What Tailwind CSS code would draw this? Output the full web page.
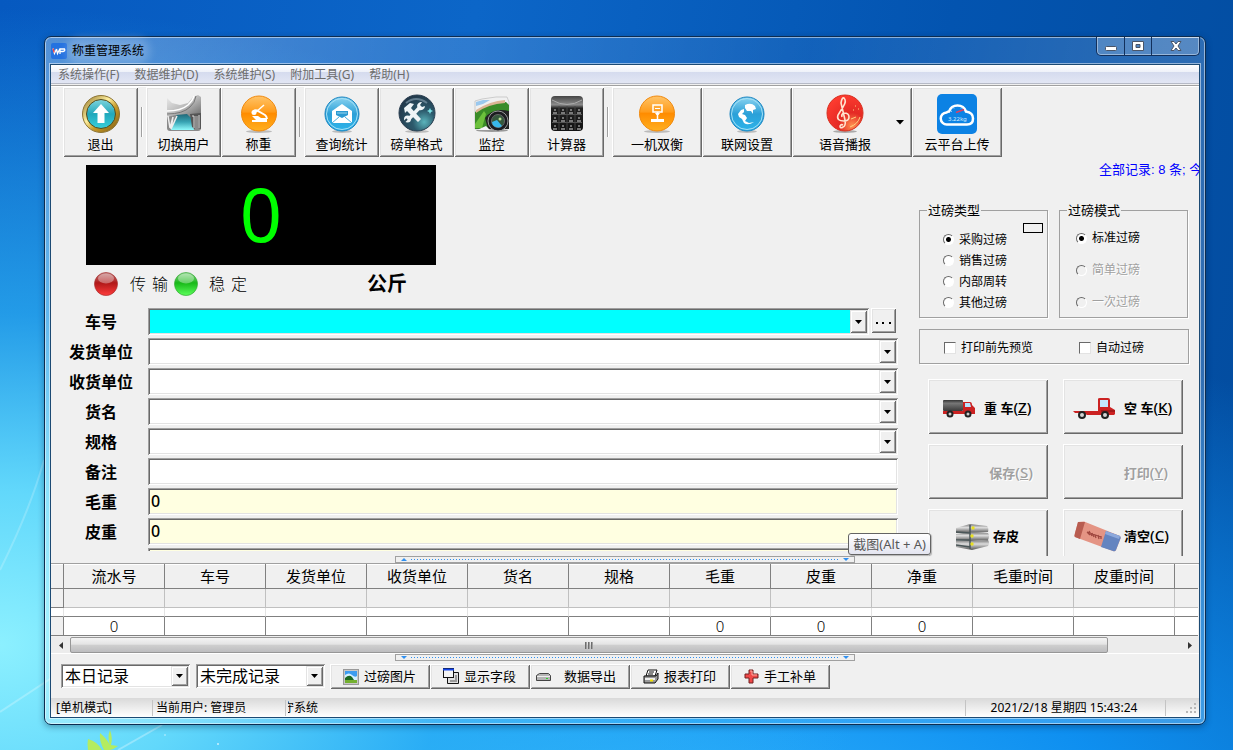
<!DOCTYPE html>
<html lang="zh-CN">

<head>
    <meta charset="UTF-8" />
    <title>称重管理系统</title>
    <script src="https://cdn.jsdelivr.net/npm/@tailwindcss/browser@4"></script>
</head>

<body class="font-['Noto_Sans','Noto_Sans_CJK_SC',sans-serif] text-black">
    <!-- Desktop -->
    <div class="relative h-screen overflow-hidden bg-[radial-gradient(ellipse_70%_85%_at_0%_86%,#8cf0ff_0%,#62d8fb_24%,#2cb0f4c0_52%,#1c90f000_100%),radial-gradient(ellipse_100%_75%_at_48%_115%,#38baff_0%,#1098fae0_45%,#0a60d000_100%),linear-gradient(100deg,#0659c0_0%,#0c66c8_35%,#0354b0_70%,#034c9e_100%)] pt-9 pr-[27px] pb-[25px] pl-11">
        <svg class="absolute bottom-0 left-0" width="260" height="300" viewBox="0 0 260 300" fill="none">
            <path d="M0 262 L170 150" stroke="#fff" stroke-opacity=".25" stroke-width="2" />
            <path d="M118 300 L162 275" stroke="#fff" stroke-opacity=".3" stroke-width="2" />
            <path d="M0 120 Q30 60 44 10" stroke="#fff" stroke-opacity=".2" stroke-width="2" />
            <path d="M88 300 Q87 294 88 289 Q98 292 102 300 Z" fill="#b4ec60" />
            <path d="M104 300 Q99 291 100 283 Q107 289 110 295 Q107 287 110 280 Q113 288 111 295 L118 296 Q114 299 110 300 Z" fill="#b4ec60" />
            <circle cx="218" cy="294" r="1" fill="#fff" fill-opacity=".7" />
            <circle cx="165" cy="285" r="1" fill="#fff" fill-opacity=".4" />
        </svg>

        <!-- Window -->
        <div class="relative flex h-full flex-col rounded-[7px] border border-[#0c2c50] bg-[linear-gradient(100deg,#ffffff4d_0%,#ffffff26_30%,#ffffff0d_60%,#ffffff33_100%)] px-[5px] pb-[6px] shadow-[inset_0_0_0_1px_#ffffff80,0_2px_6px_#00204060]">
            <!-- Title bar -->
            <header class="flex h-[27px] shrink-0 justify-between">
                <div class="flex items-center pl-px">
                    <svg width="16" height="16" viewBox="0 0 16 16">
                        <rect width="16" height="16" rx="2" fill="#2472e0" />
                        <path d="M2 5.500l1.500 5L5.500 6M5.500 6l1 4.500L9 5.500v5.500M9 6h4.500q1 2-1.500 2.500H9" fill="none" stroke="#fff" stroke-width="1.300" />
                        <path d="M2 5.500l1.200 4" stroke="#f04040" stroke-width="1.300" />
                    </svg>
                    <h1 class="ml-[5px] rounded-full bg-white/20 text-xs leading-4 shadow-[0_0_8px_6px_#ffffff33]">称重管理系统</h1>
                </div>
                <div class="flex h-[19px] rounded-b-[5px] border border-t-0 border-[#12305c] bg-white/20 shadow-[inset_0_0_0_1px_#ffffff66]">
                    <button class="flex w-7 items-center justify-center border-r border-[#12305c]" aria-label="最小化">
                        <svg width="12" height="12" viewBox="0 0 12 12"><rect x=".5" y="6.500" width="11" height="4" rx="1" fill="#fff" stroke="#4a5568" /></svg>
                    </button>
                    <button class="flex w-[27px] items-center justify-center border-r border-[#12305c]" aria-label="最大化">
                        <svg width="12" height="10" viewBox="0 0 12 10"><path fill-rule="evenodd" d="M.5.500h11v9H.5zM4 3.500v3h4v-3z" fill="#fff" stroke="#4a5568" /></svg>
                    </button>
                    <button class="flex w-[47px] items-center justify-center" aria-label="关闭">
                        <svg width="12" height="10" viewBox="0 0 12 10"><path d="M1 .500h3l2 2.500 2-2.500h3L8 5l3 4.500H8L6 7 4 9.500H1L4 5z" fill="#fff" stroke="#4a5568" /></svg>
                    </button>
                </div>
            </header>

            <!-- Client area -->
            <div class="flex min-h-0 flex-1 flex-col overflow-hidden border border-[#1c4a74] bg-[#f0f0f0] shadow-[0_0_0_1px_#ffffff80]">
                <!-- Menu -->
                <nav class="flex h-[19px] shrink-0 items-center gap-[15px] border-b border-[#b6bac6] bg-[linear-gradient(#fff_0%,#eef1f9_38%,#d5dbee_40%,#e2e6f4_100%)] pt-0.5 pl-[7px] text-xs leading-4 text-[#6d6d6d]">
                    <a href="#">系统操作(F)</a>
                    <a href="#">数据维护(D)</a>
                    <a href="#">系统维护(S)</a>
                    <a href="#">附加工具(G)</a>
                    <a href="#">帮助(H)</a>
                </nav>

                <!-- Toolbar -->
                <div class="mt-px flex shrink-0 items-start border-t border-[#a0a0a0] pt-px pl-3 text-[13px] leading-5 shadow-[inset_0_1px_#fff]">
                    <button class="flex h-[70px] w-[75px] flex-col items-center pt-[7px] shadow-[inset_1px_1px_#fff,inset_-1px_-1px_#696969,inset_2px_2px_#e3e3e3,inset_-2px_-2px_#a0a0a0]">
                        <svg class="shrink-0" width="40" height="40" viewBox="0 0 40 40">
                            <defs>
                                <linearGradient id="gold" x2="1" y2="1"><stop stop-color="#8a6a1c" /><stop offset=".4" stop-color="#fff0a0" /><stop offset=".6" stop-color="#c89a28" /><stop offset="1" stop-color="#7a5a14" /></linearGradient>
                                <linearGradient id="teal" x2="0" y2="1"><stop stop-color="#7fd4dc" /><stop offset=".5" stop-color="#22a8bc" /><stop offset="1" stop-color="#38d0dc" /></linearGradient>
                            </defs>
                            <circle cx="20" cy="20" r="18.500" fill="url(#gold)" stroke="#8c7434" />
                            <circle cx="20" cy="20" r="14.500" fill="url(#teal)" stroke="#5a4a18" />
                            <path d="M20 10l8 9h-4.500v10h-7V19H12z" fill="#fff" />
                        </svg>
                        退出
                    </button>
                    <div class="mx-[3px] mt-5 h-[30px] w-0.5 border-l border-[#a0a0a0] bg-white"></div>
                    <button class="flex h-[70px] w-[75px] flex-col items-center pt-[7px] shadow-[inset_1px_1px_#fff,inset_-1px_-1px_#696969,inset_2px_2px_#e3e3e3,inset_-2px_-2px_#a0a0a0]">
                        <svg class="shrink-0" width="40" height="40" viewBox="0 0 40 40">
                            <defs>
                                <linearGradient id="steel" x2="1" y2="1"><stop stop-color="#eee" /><stop offset=".5" stop-color="#bbb" /><stop offset="1" stop-color="#666" /></linearGradient>
                                <linearGradient id="road" x2="0" y2="1"><stop stop-color="#226878" /><stop offset=".5" stop-color="#38a4b4" /><stop offset="1" stop-color="#90fafc" /></linearGradient>
                            </defs>
                            <path d="M3 20h34v14q0 3-3 3H6q-3 0-3-3z" fill="#8a8a8a" />
                            <path d="M13 20h13l4 16H7z" fill="url(#road)" />
                            <path d="M3 4l5 5 8 2 8-2 5-6 5-2 3 2v18l-11 2-3-3-11 1-9 2z" fill="url(#steel)" />
                            <path d="M3 17q14 0 21-6 5-5 6-9" fill="none" stroke="#fff" stroke-width="1.500" />
                            <path d="M3 20q16 0 23-7 5-4 6-11" fill="none" stroke="#777" />
                            <path d="M4 22l2 12 3-11M9 23l-2 12 6-13" fill="none" stroke="#eee" stroke-width="1.500" />
                            <path d="M26 20l11-1v16l-3-1V22l-3 0v13l-3-2z" fill="#555" />
                            <path d="M28 22h2v12M35 21v13" stroke="#ddd" fill="none" />
                        </svg>
                        切换用户
                    </button>
                    <button class="flex h-[70px] w-[75px] flex-col items-center pt-[7px] shadow-[inset_1px_1px_#fff,inset_-1px_-1px_#696969,inset_2px_2px_#e3e3e3,inset_-2px_-2px_#a0a0a0]">
                        <svg class="shrink-0" width="40" height="40" viewBox="0 0 40 40">
                            <defs>
                                <linearGradient id="orange" x2="0" y2="1"><stop stop-color="#ffc468" /><stop offset=".45" stop-color="#ff9c1c" /><stop offset=".5" stop-color="#ff8c00" /><stop offset="1" stop-color="#ffb020" /></linearGradient>
                            </defs>
                            <ellipse cx="20" cy="37.500" rx="13" ry="1.500" fill="#bbb" />
                            <circle cx="20" cy="19.500" r="17.500" fill="url(#orange)" stroke="#f08a10" />
                            <path d="M17 18l8-7" fill="none" stroke="#fff" stroke-width="1.500" />
                            <path d="M14 18.500q1-3 4-2l8 4.500q2 1.500 2 4" fill="none" stroke="#fff" stroke-width="2" />
                            <circle cx="15" cy="18.500" r="2.500" fill="#fff" />
                            <path d="M13 22h6l3 2h6v4H13v-2h4z" fill="#fff" />
                        </svg>
                        称重
                    </button>
                    <div class="mx-[3px] mt-5 h-[30px] w-0.5 border-l border-[#a0a0a0] bg-white"></div>
                    <button class="flex h-[70px] w-[75px] flex-col items-center pt-[7px] shadow-[inset_1px_1px_#fff,inset_-1px_-1px_#696969,inset_2px_2px_#e3e3e3,inset_-2px_-2px_#a0a0a0]">
                        <svg class="shrink-0" width="40" height="40" viewBox="0 0 40 40">
                            <defs>
                                <linearGradient id="sky" x2="0" y2="1"><stop stop-color="#8cd4f0" /><stop offset=".5" stop-color="#2ba0d8" /><stop offset="1" stop-color="#2cb4ea" /></linearGradient>
                            </defs>
                            <ellipse cx="20" cy="37.500" rx="10" ry="1.500" fill="#bbb" />
                            <circle cx="20" cy="20" r="17" fill="url(#sky)" stroke="#1a84c0" />
                            <circle cx="20" cy="20" r="15.500" fill="none" stroke="#a4e0f6" />
                            <path d="M10 17L20 10l10 7v12H10z" fill="#fff" />
                            <path d="M14 17h12v4l-6 3-6-3z" fill="#2b9ad2" />
                            <path d="M15 19h10" stroke="#9ad6ee" />
                            <path d="M10 29l7-6M30 29l-7-6" stroke="#4aaede" />
                        </svg>
                        查询统计
                    </button>
                    <button class="flex h-[70px] w-[75px] flex-col items-center pt-[7px] shadow-[inset_1px_1px_#fff,inset_-1px_-1px_#696969,inset_2px_2px_#e3e3e3,inset_-2px_-2px_#a0a0a0]">
                        <svg class="shrink-0" width="40" height="40" viewBox="0 0 40 40">
                            <defs>
                                <radialGradient id="slate" cx=".7" cy=".75" r=".8"><stop stop-color="#5ab4bc" /><stop offset=".4" stop-color="#2c5a6c" /><stop offset="1" stop-color="#22384a" /></radialGradient>
                            </defs>
                            <ellipse cx="20" cy="37.500" rx="12" ry="1.500" fill="#bbb" />
                            <circle cx="20" cy="19" r="18" fill="url(#slate)" stroke="#2a3e50" />
                            <path d="M9 9q10-8 21 0" stroke="#8aa4b4" stroke-width="2" fill="none" opacity=".6" />
                            <path d="M7 14l6-5 4 1-3 4 10 11-3 3-11-11-2 2z" fill="#eef4f6" />
                            <path d="M11 26l12-13" stroke="#eef4f6" stroke-width="3.500" />
                            <path d="M20 12a4.500 4.500 0 0 1 5-4l-2 3 2 2 3-1a4.500 4.500 0 0 1-6 4z" fill="#eef4f6" />
                            <circle cx="10.500" cy="25" r="3.500" fill="#eef4f6" />
                            <path d="M7 28l3-3" stroke="#2c4a5c" stroke-width="2" />
                            <path d="M33 14l1 2 2 1-2 1-1 2-1-2-2-1 2-1z" fill="#7ae0e4" />
                        </svg>
                        磅单格式
                    </button>
                    <button class="flex h-[70px] w-[75px] flex-col items-center pt-[7px] shadow-[inset_1px_1px_#fff,inset_-1px_-1px_#696969,inset_2px_2px_#e3e3e3,inset_-2px_-2px_#a0a0a0]">
                        <svg class="shrink-0" width="40" height="40" viewBox="0 0 40 40">
                            <ellipse cx="20" cy="36.500" rx="16" ry="1.500" fill="#999" />
                            <path d="M3 7l7-2 14-2 11 0 2 5-1 27H3z" fill="#f0f0f0" stroke="#bbb" stroke-width=".7" />
                            <path d="M4 8l7-2 7 0-7 4-7 2z" fill="#9ac8ee" />
                            <path d="M3 18Q14 9 34 8l3 3v24H3z" fill="#3a8c28" />
                            <path d="M4 16Q18 7 33 6v3Q16 10 4 19z" fill="#dcb494" />
                            <path d="M3 30l9-13 2 3-4 14H3z" fill="#6cc03c" />
                            <path d="M13 24q8-11 24-7v18H16z" fill="#222" />
                            <path d="M5 36l9-4 4 4z" fill="#f4f4f8" />
                            <circle cx="26" cy="27" r="10" fill="#1c1c20" stroke="#999" />
                            <circle cx="26" cy="27" r="6.500" fill="#34583c" stroke="#666" />
                            <path d="M20 28a6 6 0 0 0 10 4l-5-6z" fill="#38b8ec" />
                            <circle cx="28" cy="25" r="1.500" fill="#b8e090" />
                        </svg>
                        监控
                    </button>
                    <button class="flex h-[70px] w-[75px] flex-col items-center pt-[7px] shadow-[inset_1px_1px_#fff,inset_-1px_-1px_#696969,inset_2px_2px_#e3e3e3,inset_-2px_-2px_#a0a0a0]">
                        <svg class="shrink-0" width="40" height="40" viewBox="0 0 40 40">
                            <defs>
                                <linearGradient id="keys" x2="0" y2="1"><stop stop-color="#444" /><stop offset=".25" stop-color="#8c8c8c" /><stop offset=".35" stop-color="#222" /><stop offset="1" stop-color="#111" /></linearGradient>
                            </defs>
                            <rect x="4" y="2" width="32" height="35" rx="4" fill="url(#keys)" />
                            <path d="M5 6q15 9 30 0" fill="none" stroke="#aaa" />
                            <path d="M5 12.500h30M5 20.500h30M5 28.500h30" stroke="#555" />
                            <path d="M12 12v24M20 12v24M28 12v24" stroke="#444" />
                            <path d="M8 15v2M16 15v2M24 15v2M32 15v2M8 23v2M16 23v2M24 23v2M32 23v2M8 31v2M16 31v2M24 31v2M32 31v2" stroke="#ccc" />
                            <path d="M6 19h4M14 19h4M22 19h4M30 19h4M6 27h4M14 27h4M22 27h4M30 27h4M6 35h4M14 35h4M22 35h4M30 35h4" stroke="#999" stroke-width="1.500" />
                        </svg>
                        计算器
                    </button>
                    <div class="mx-[3px] mt-5 h-[30px] w-0.5 border-l border-[#a0a0a0] bg-white"></div>
                    <button class="flex h-[70px] w-[90px] flex-col items-center pt-[7px] shadow-[inset_1px_1px_#fff,inset_-1px_-1px_#696969,inset_2px_2px_#e3e3e3,inset_-2px_-2px_#a0a0a0]">
                        <svg class="shrink-0" width="40" height="40" viewBox="0 0 40 40">
                            <ellipse cx="20" cy="37.500" rx="13" ry="1.500" fill="#bbb" />
                            <circle cx="20" cy="19.500" r="17.500" fill="url(#orange)" stroke="#f08a10" />
                            <path d="M16 11h9v7h-9zM20.500 18v7" fill="none" stroke="#fff" stroke-width="1.500" />
                            <path d="M18 14.500h5" stroke="#fff" />
                            <path d="M18 19h5l-1.500 2h-2zM14 25h13v3H14z" fill="#fff" />
                        </svg>
                        一机双衡
                    </button>
                    <button class="flex h-[70px] w-[90px] flex-col items-center pt-[7px] shadow-[inset_1px_1px_#fff,inset_-1px_-1px_#696969,inset_2px_2px_#e3e3e3,inset_-2px_-2px_#a0a0a0]">
                        <svg class="shrink-0" width="40" height="40" viewBox="0 0 40 40">
                            <ellipse cx="20" cy="37.500" rx="10" ry="1.500" fill="#bbb" />
                            <circle cx="20" cy="20" r="17" fill="url(#sky)" stroke="#1a84c0" />
                            <circle cx="20" cy="20" r="15.500" fill="none" stroke="#a4e0f6" />
                            <path d="M18 11q6-3 10 1l1 3-3 1 0 4-2-3-4 0-2-3z" fill="#fff" />
                            <path d="M11 20l3-4 3-1 0 3-2 2 3 1 2 3-2 3 4 2 5-1q-6 4-10 1l-2-4-3-2z" fill="#fff" />
                        </svg>
                        联网设置
                    </button>
                    <button class="relative flex h-[70px] w-[120px] flex-col items-center pt-[7px] pr-[14px] shadow-[inset_1px_1px_#fff,inset_-1px_-1px_#696969,inset_2px_2px_#e3e3e3,inset_-2px_-2px_#a0a0a0]">
                        <svg class="shrink-0" width="40" height="40" viewBox="0 0 40 40">
                            <defs>
                                <radialGradient id="ruby" cx=".7" cy=".85" r=".9"><stop stop-color="#ff9050" /><stop offset=".4" stop-color="#e42a24" /><stop offset="1" stop-color="#ff3c30" /></radialGradient>
                            </defs>
                            <ellipse cx="20" cy="37.500" rx="12" ry="1.500" fill="#aaa" />
                            <circle cx="20" cy="19" r="18" fill="url(#ruby)" stroke="#d83020" />
                            <path d="M18 33q-3 2-3-1 1-2 3-1M18 33q3-1 2-7L16 9q1-6 3-5 3 3-1 9l-5 8q-2 6 6 6 5 0 5-4t-5-4q-3 1-2 4" fill="none" stroke="#ffe4d0" stroke-width="1.600" />
                            <path d="M26 25l5-2M30 12l1 0M33 15l1 0M28 16l1 0M25 33q8-3 10-10" stroke="#ffd080" fill="none" />
                        </svg>
                        语音播报
                        <svg class="absolute top-[33px] right-2" width="8" height="5" viewBox="0 0 8 5"><path d="M0 0h8L4 4.500z" /></svg>
                    </button>
                    <button class="flex h-[70px] w-[90px] flex-col items-center pt-[7px] shadow-[inset_1px_1px_#fff,inset_-1px_-1px_#696969,inset_2px_2px_#e3e3e3,inset_-2px_-2px_#a0a0a0]">
                        <svg class="shrink-0" width="40" height="40" viewBox="0 0 40 40">
                            <rect width="40" height="40" rx="5" fill="#0c82e4" />
                            <path d="M10 30.500a6 6 0 0 1-.5-12q1.500-1 2.500-1a9 9 0 0 1 17 0q7 1 7 7 0 6-6 6z" fill="none" stroke="#fff" stroke-width="2.500" />
                            <path d="M14 17l1 .5M16 13.500l1 1M20.500 12v1M25 13.500l-1 1" stroke="#bfe0ff" />
                            <path d="M19 18.500l8-3" stroke="#e04060" stroke-width="1.500" />
                            <text x="11" y="27" font-size="6" font-family="Noto Sans" fill="#d4ecff">3.22kg</text>
                        </svg>
                        云平台上传
                    </button>
                </div>

                <!-- Weighing panel -->
                <div class="relative flex min-h-0 flex-1 gap-[21px]">
                    <div class="mb-[5px] min-w-0 flex-1 overflow-hidden">
                        <div class="mt-2 ml-[35px] flex h-[100px] w-[350px] items-center justify-center bg-black pb-0.5 text-[74px] leading-none text-[#00ff00]">0</div>
                        <div class="flex h-[43px] w-[385px] items-center pb-[5px] pl-[43px] text-base">
                            <svg width="24" height="24" viewBox="0 0 24 24">
                                <defs><linearGradient id="ledRed" x2="0" y2="1"><stop stop-color="#c08080" /><stop offset=".45" stop-color="#b01818" /><stop offset="1" stop-color="#ff3c3c" /></linearGradient></defs>
                                <circle cx="12" cy="12" r="11.500" fill="url(#ledRed)" stroke="#a83030" stroke-width=".7" />
                                <ellipse cx="12" cy="6.500" rx="8" ry="5" fill="#fff" opacity=".35" />
                            </svg>
                            <span class="ml-3 flex w-[44px] gap-[6px] font-light"><span>传</span> <span>输</span></span>
                            <svg width="24" height="24" viewBox="0 0 24 24">
                                <defs><linearGradient id="ledGreen" x2="0" y2="1"><stop stop-color="#90d890" /><stop offset=".45" stop-color="#18b818" /><stop offset="1" stop-color="#5cff5c" /></linearGradient></defs>
                                <circle cx="12" cy="12" r="11.500" fill="url(#ledGreen)" stroke="#38a838" stroke-width=".7" />
                                <ellipse cx="12" cy="6.500" rx="8" ry="5" fill="#fff" opacity=".35" />
                            </svg>
                            <span class="ml-[11px] flex gap-[6px] font-light"><span>稳</span> <span>定</span></span>
                            <span class="mr-[29px] ml-auto text-xl leading-6 font-bold">公斤</span>
                        </div>

                        <form class="grid grid-cols-[97px_1fr] gap-y-[3px] text-base leading-6">
                            <label for="plate" class="pt-0.5 pl-[3px] text-center font-bold">车号</label>
                            <div class="flex">
                                <div class="relative h-[27px] flex-1 p-0.5 shadow-[inset_1px_1px_#a0a0a0,inset_-1px_-1px_#fff,inset_2px_2px_#696969,inset_-2px_-2px_#e3e3e3]">
                                    <select id="plate" class="block h-[23px] w-full appearance-none bg-[#00ffff]"><option></option></select>
                                    <span class="pointer-events-none absolute top-0.5 right-0.5 flex h-[23px] w-[17px] items-center justify-center bg-[#f0f0f0] shadow-[inset_1px_1px_#e3e3e3,inset_-1px_-1px_#696969,inset_2px_2px_#fff,inset_-2px_-2px_#a0a0a0]"><svg width="7" height="4" viewBox="0 0 7 4"><path d="M0 0h7L3.500 4z" /></svg></span>
                                </div>
                                <button type="button" class="mr-0.5 ml-0.5 h-[25px] w-[25px] shadow-[inset_1px_1px_#fff,inset_-1px_-1px_#696969,inset_2px_2px_#e3e3e3,inset_-2px_-2px_#a0a0a0]" aria-label="选择车号">
                                    <svg class="mx-auto mt-1" width="17" height="4" viewBox="0 0 17 4"><path d="M1 1h2v2H1zM7 1h2v2H7zM14 1h2v2h-2z" /></svg>
                                </button>
                            </div>

                            <label for="sender" class="pt-0.5 pl-[3px] text-center font-bold">发货单位</label>
                            <div class="relative h-[27px] p-0.5 shadow-[inset_1px_1px_#a0a0a0,inset_-1px_-1px_#fff,inset_2px_2px_#696969,inset_-2px_-2px_#e3e3e3]">
                                <select id="sender" class="block h-[23px] w-full appearance-none bg-white"><option></option></select>
                                <span class="pointer-events-none absolute top-0.5 right-0.5 flex h-[23px] w-[17px] items-center justify-center bg-[#f0f0f0] shadow-[inset_1px_1px_#e3e3e3,inset_-1px_-1px_#696969,inset_2px_2px_#fff,inset_-2px_-2px_#a0a0a0]"><svg width="7" height="4" viewBox="0 0 7 4"><path d="M0 0h7L3.500 4z" /></svg></span>
                            </div>

                            <label for="receiver" class="pt-0.5 pl-[3px] text-center font-bold">收货单位</label>
                            <div class="relative h-[27px] p-0.5 shadow-[inset_1px_1px_#a0a0a0,inset_-1px_-1px_#fff,inset_2px_2px_#696969,inset_-2px_-2px_#e3e3e3]">
                                <select id="receiver" class="block h-[23px] w-full appearance-none bg-white"><option></option></select>
                                <span class="pointer-events-none absolute top-0.5 right-0.5 flex h-[23px] w-[17px] items-center justify-center bg-[#f0f0f0] shadow-[inset_1px_1px_#e3e3e3,inset_-1px_-1px_#696969,inset_2px_2px_#fff,inset_-2px_-2px_#a0a0a0]"><svg width="7" height="4" viewBox="0 0 7 4"><path d="M0 0h7L3.500 4z" /></svg></span>
                            </div>

                            <label for="goods" class="pt-0.5 pl-[3px] text-center font-bold">货名</label>
                            <div class="relative h-[27px] p-0.5 shadow-[inset_1px_1px_#a0a0a0,inset_-1px_-1px_#fff,inset_2px_2px_#696969,inset_-2px_-2px_#e3e3e3]">
                                <select id="goods" class="block h-[23px] w-full appearance-none bg-white"><option></option></select>
                                <span class="pointer-events-none absolute top-0.5 right-0.5 flex h-[23px] w-[17px] items-center justify-center bg-[#f0f0f0] shadow-[inset_1px_1px_#e3e3e3,inset_-1px_-1px_#696969,inset_2px_2px_#fff,inset_-2px_-2px_#a0a0a0]"><svg width="7" height="4" viewBox="0 0 7 4"><path d="M0 0h7L3.500 4z" /></svg></span>
                            </div>

                            <label for="spec" class="pt-0.5 pl-[3px] text-center font-bold">规格</label>
                            <div class="relative h-[27px] p-0.5 shadow-[inset_1px_1px_#a0a0a0,inset_-1px_-1px_#fff,inset_2px_2px_#696969,inset_-2px_-2px_#e3e3e3]">
                                <select id="spec" class="block h-[23px] w-full appearance-none bg-white"><option></option></select>
                                <span class="pointer-events-none absolute top-0.5 right-0.5 flex h-[23px] w-[17px] items-center justify-center bg-[#f0f0f0] shadow-[inset_1px_1px_#e3e3e3,inset_-1px_-1px_#696969,inset_2px_2px_#fff,inset_-2px_-2px_#a0a0a0]"><svg width="7" height="4" viewBox="0 0 7 4"><path d="M0 0h7L3.500 4z" /></svg></span>
                            </div>

                            <label for="note" class="pt-0.5 pl-[3px] text-center font-bold">备注</label>
                            <input id="note" type="text" class="h-[27px] bg-white px-1 shadow-[inset_1px_1px_#a0a0a0,inset_-1px_-1px_#fff,inset_2px_2px_#696969,inset_-2px_-2px_#e3e3e3]" />

                            <label for="gross" class="pt-0.5 pl-[3px] text-center font-bold">毛重</label>
                            <input id="gross" type="text" value="0" class="h-[27px] bg-[#ffffe1] px-[3px] pb-0.5 font-medium shadow-[inset_1px_1px_#a0a0a0,inset_-1px_-1px_#fff,inset_2px_2px_#696969,inset_-2px_-2px_#e3e3e3]" />

                            <label for="tare" class="pt-0.5 pl-[3px] text-center font-bold">皮重</label>
                            <input id="tare" type="text" value="0" class="h-[27px] bg-[#ffffe1] px-[3px] pb-0.5 font-medium shadow-[inset_1px_1px_#a0a0a0,inset_-1px_-1px_#fff,inset_2px_2px_#696969,inset_-2px_-2px_#e3e3e3]" />

                            <input type="text" aria-label="净重" class="col-start-2 h-[27px] bg-[#ffffe1] px-[3px] shadow-[inset_1px_1px_#a0a0a0,inset_-1px_-1px_#fff,inset_2px_2px_#696969,inset_-2px_-2px_#e3e3e3]" />
                        </form>
                    </div>

                    <div class="h-full w-[280px] shrink-0 overflow-hidden pr-[10px] text-xs">
                        <p class="mt-[5px] -mr-[10px] pl-[180px] font-['Liberation_Sans','Noto_Sans_CJK_SC',sans-serif] text-[13px] leading-4 whitespace-nowrap text-[#0000ff]">全部记录: 8 条; 今日</p>

                        <div class="mt-6 grid grid-cols-[129px_129px] gap-[11px]">
                            <fieldset class="relative h-[116px] border border-[#a0a0a0] pl-[23px] shadow-[1px_1px_#fff]">
                                <legend class="-ml-4 px-px text-[13px] leading-4">过磅类型</legend>
                                <span class="absolute top-[5px] right-1 h-[10px] w-5 border border-black"></span>
                                <div class="pt-[11px]">
                                    <label class="flex h-[21px] items-center gap-[5px]"><input type="radio" name="kind" checked class="h-[11px] w-[11px] appearance-none rounded-full border border-t-[#696969] border-r-white border-b-white border-l-[#696969] bg-white checked:bg-[radial-gradient(circle,#000_2px,#fff_3px)]" />采购过磅</label>
                                    <label class="flex h-[21px] items-center gap-[5px]"><input type="radio" name="kind" class="h-[11px] w-[11px] appearance-none rounded-full border border-t-[#696969] border-r-white border-b-white border-l-[#696969] bg-white checked:bg-[radial-gradient(circle,#000_2px,#fff_3px)]" />销售过磅</label>
                                    <label class="flex h-[21px] items-center gap-[5px]"><input type="radio" name="kind" class="h-[11px] w-[11px] appearance-none rounded-full border border-t-[#696969] border-r-white border-b-white border-l-[#696969] bg-white checked:bg-[radial-gradient(circle,#000_2px,#fff_3px)]" />内部周转</label>
                                    <label class="flex h-[21px] items-center gap-[5px]"><input type="radio" name="kind" class="h-[11px] w-[11px] appearance-none rounded-full border border-t-[#696969] border-r-white border-b-white border-l-[#696969] bg-white checked:bg-[radial-gradient(circle,#000_2px,#fff_3px)]" />其他过磅</label>
                                </div>
                            </fieldset>
                            <fieldset class="h-[116px] border border-[#a0a0a0] pl-4 shadow-[1px_1px_#fff]">
                                <legend class="-ml-[9px] px-px text-[13px] leading-4">过磅模式</legend>
                                <div class="pt-1">
                                    <label class="flex h-8 items-center gap-[5px]"><input type="radio" name="mode" checked class="h-[11px] w-[11px] appearance-none rounded-full border border-t-[#696969] border-r-white border-b-white border-l-[#696969] bg-white checked:bg-[radial-gradient(circle,#000_2px,#fff_3px)]" />标准过磅</label>
                                    <label class="flex h-8 items-center gap-[5px] text-[#a0a0a0] [text-shadow:1px_1px_#fff]"><input type="radio" name="mode" disabled class="h-[11px] w-[11px] appearance-none rounded-full border border-t-[#696969] border-r-white border-b-white border-l-[#696969]" />简单过磅</label>
                                    <label class="flex h-8 items-center gap-[5px] text-[#a0a0a0] [text-shadow:1px_1px_#fff]"><input type="radio" name="mode" disabled class="h-[11px] w-[11px] appearance-none rounded-full border border-t-[#696969] border-r-white border-b-white border-l-[#696969]" />一次过磅</label>
                                </div>
                            </fieldset>
                        </div>

                        <div class="mt-[11px] flex h-[35px] items-center border border-[#a0a0a0] pt-0.5 pl-6 shadow-[1px_1px_#fff]">
                            <label class="flex w-[135px] items-center gap-[5px]"><input type="checkbox" class="h-3 w-3 appearance-none border border-t-[#696969] border-r-[#e3e3e3] border-b-[#e3e3e3] border-l-[#696969] bg-white checked:bg-black" />打印前先预览</label>
                            <label class="flex items-center gap-[5px]"><input type="checkbox" class="h-3 w-3 appearance-none border border-t-[#696969] border-r-[#e3e3e3] border-b-[#e3e3e3] border-l-[#696969] bg-white checked:bg-black" />自动过磅</label>
                        </div>

                        <div class="mt-[15px] grid grid-cols-[120px_120px] gap-x-[15px] gap-y-[10px] pl-[9px] text-[13px] font-bold">
                            <button class="flex h-[55px] items-center pt-1 pl-[15px] shadow-[inset_1px_1px_#fff,inset_-1px_-1px_#696969,inset_2px_2px_#e3e3e3,inset_-2px_-2px_#a0a0a0]">
                                <svg width="33" height="20" viewBox="0 0 33 20">
                                    <defs><linearGradient id="cargo" x2="0" y2="1"><stop stop-color="#333" /><stop offset=".3" stop-color="#777" /><stop offset="1" stop-color="#3a3a3a" /></linearGradient></defs>
                                    <rect x="0" y="1" width="20" height="11" rx="1" fill="url(#cargo)" />
                                    <path d="M0 12h20V3h7q2 0 2 3l3 3v6H0z" fill="#cc2222" />
                                    <path d="M22 4h5l1 4h-6z" fill="#b8e4ff" />
                                    <circle cx="7" cy="15" r="3.500" fill="#222" /><circle cx="7" cy="15" r="1.500" fill="#ccc" />
                                    <circle cx="25" cy="15" r="3.500" fill="#222" /><circle cx="25" cy="15" r="1.500" fill="#ccc" />
                                </svg>
                                <span class="ml-2 whitespace-nowrap">重 车<span class="text-[15px] leading-4 font-medium">(<u>Z</u>)</span></span>
                            </button>
                            <button class="flex h-[55px] items-center pt-1 pl-[10px] shadow-[inset_1px_1px_#fff,inset_-1px_-1px_#696969,inset_2px_2px_#e3e3e3,inset_-2px_-2px_#a0a0a0]">
                                <svg width="43" height="24" viewBox="0 0 43 24">
                                    <path d="M0 14h25V2q0-1 2-1h8q2 0 2 2v7l5 3v4l-1 1H14l-3-2H2z" fill="#cc2222" />
                                    <path d="M27 3h8v7h-8z" fill="#c4e8fc" />
                                    <path d="M28 14h14" stroke="#801010" />
                                    <circle cx="9" cy="18" r="4" fill="#222" /><circle cx="9" cy="18" r="2" fill="#d4d4d4" />
                                    <circle cx="32" cy="18" r="4" fill="#222" /><circle cx="32" cy="18" r="2" fill="#d4d4d4" />
                                </svg>
                                <span class="ml-2 whitespace-nowrap">空 车<span class="text-[15px] leading-4 font-medium">(<u>K</u>)</span></span>
                            </button>
                            <button disabled class="flex h-[55px] items-center justify-end pt-1 pr-[15px] text-[#a0a0a0] shadow-[inset_1px_1px_#fff,inset_-1px_-1px_#696969,inset_2px_2px_#e3e3e3,inset_-2px_-2px_#a0a0a0] [text-shadow:1px_1px_#fff]">
                                <span>保存<span class="text-[15px] leading-4 font-medium">(<u>S</u>)</span></span>
                            </button>
                            <button disabled class="flex h-[55px] items-center justify-end pt-1 pr-[15px] text-[#a0a0a0] shadow-[inset_1px_1px_#fff,inset_-1px_-1px_#696969,inset_2px_2px_#e3e3e3,inset_-2px_-2px_#a0a0a0] [text-shadow:1px_1px_#fff]">
                                <span>打印<span class="text-[15px] leading-4 font-medium">(<u>Y</u>)</span></span>
                            </button>
                            <button class="flex h-[55px] items-center pl-7 shadow-[inset_1px_1px_#fff,inset_-1px_-1px_#696969,inset_2px_2px_#e3e3e3,inset_-2px_-2px_#a0a0a0]">
                                <svg width="33" height="28" viewBox="0 0 33 28">
                                    <defs><linearGradient id="pipe" x2="0" y2="1"><stop stop-color="#777" /><stop offset=".4" stop-color="#ddd" /><stop offset="1" stop-color="#555" /></linearGradient></defs>
                                    <path d="M0 5l14-4 17 2q2 2 1 6l-18 1L0 10z" fill="url(#pipe)" />
                                    <path d="M0 11l14-2 18 1q2 3 0 7l-18 1-14-1z" fill="url(#pipe)" />
                                    <path d="M0 18l14 0 18-1q2 3 0 6l-16 4L0 24z" fill="url(#pipe)" />
                                    <path d="M0 9l14 1M0 17h14M0 22l14 2M14 2v24" stroke="#4a5658" stroke-width="1.500" />
                                    <circle cx="17" cy="5" r="1.700" fill="#e8e020" /><circle cx="16" cy="13" r="1.700" fill="#e8e020" /><circle cx="16" cy="21" r="1.700" fill="#e8e020" />
                                </svg>
                                <span class="ml-1">存皮</span>
                            </button>
                            <button class="flex h-[55px] items-center pl-[11px] shadow-[inset_1px_1px_#fff,inset_-1px_-1px_#696969,inset_2px_2px_#e3e3e3,inset_-2px_-2px_#a0a0a0]">
                                <svg width="47" height="31" viewBox="0 0 47 31">
                                    <path d="M4 1l6-.5L46 15q1 1 .5 2.500L42 29q-1 2-3 1L1 16q-1-1 0-4z" fill="#e49484" />
                                    <path d="M4 1l7 0-5 17L1 16q-1-1 0-4z" fill="#b85c50" />
                                    <path d="M32 10l14 5q1 1 .5 2.500L42 29q-1 2-3 1L27 26z" fill="#6484c0" />
                                    <path d="M32 10l14 5-1 3-14-5z" fill="#8ca8dc" />
                                    <path d="M13 11l3 3M15 10l3 5M18 12l2 4M21 14l1 3M24 14l1 4M27 15l0 3M13 11l14 5" stroke="#a04840" stroke-width="1.300" />
                                </svg>
                                <span class="ml-[3px]">清空<span class="text-[15px] leading-4 font-medium">(<u>C</u>)</span></span>
                            </button>
                        </div>
                    </div>

                    <div role="tooltip" class="absolute right-[268px] bottom-px rounded-[3px] border border-[#646464] bg-linear-to-b from-white to-[#e4e5f0] px-1 text-[13px] leading-5 whitespace-nowrap text-[#575757] shadow-[1px_1px_1px_#00000040]">截图(Alt + A)</div>
                </div>

                <!-- Splitter -->
                <div class="mx-auto flex h-[7px] w-2/5 shrink-0 items-center gap-1 border border-[#a0a0a0] px-[5px]">
                    <svg width="6" height="3" viewBox="0 0 6 3"><path d="M3 0l3 3H0z" fill="#3090f0" /></svg>
                    <span class="h-px flex-1 bg-[repeating-linear-gradient(90deg,#3090f0_0_1px,transparent_1px_3px)]"></span>
                    <svg width="6" height="3" viewBox="0 0 6 3"><path d="M0 0h6L3 3z" fill="#3090f0" /></svg>
                </div>

                <!-- Records -->
                <div class="shrink-0 overflow-hidden border-t border-[#a0a0a0] pr-px">
                    <table class="w-full table-fixed border-separate border-spacing-0 text-center text-[15px] leading-4 [&_td]:border-r [&_td]:p-0 [&_td]:font-light [&_th]:border-r [&_th]:border-b [&_th]:border-[#808080] [&_th]:p-0 [&_th]:font-normal">
                        <colgroup>
                            <col class="w-[13px]" />
                            <col span="11" class="w-[101px]" />
                            <col />
                        </colgroup>
                        <thead>
                            <tr class="h-[25px] bg-[#f0f0f0] shadow-[inset_0_1px_#fff]">
                                <th></th>
                                <th>流水号</th>
                                <th>车号</th>
                                <th>发货单位</th>
                                <th>收货单位</th>
                                <th>货名</th>
                                <th>规格</th>
                                <th>毛重</th>
                                <th>皮重</th>
                                <th>净重</th>
                                <th>毛重时间</th>
                                <th>皮重时间</th>
                                <th class="border-r-0!"></th>
                            </tr>
                        </thead>
                        <tbody>
                            <tr class="h-[19px] [&_td]:border-b [&_td]:border-[#c0c0c0]">
                                <td class="border-[#808080]!"></td><td></td><td></td><td></td><td></td><td></td><td></td><td></td><td></td><td></td><td></td><td></td><td class="border-r-0!"></td>
                            </tr>
                            <tr class="h-[9px] bg-white [&_td]:border-b [&_td]:border-r-[#e3e3e3] [&_td]:border-b-[#808080]">
                                <td></td><td></td><td></td><td></td><td></td><td></td><td></td><td></td><td></td><td></td><td></td><td></td><td class="border-r-0!"></td>
                            </tr>
                            <tr class="h-[19px] bg-white [&_td]:border-b [&_td]:border-[#808080]">
                                <td class="bg-[#f0f0f0]"></td><td>0</td><td></td><td></td><td></td><td></td><td></td><td>0</td><td>0</td><td>0</td><td></td><td></td><td class="border-r-0!"></td>
                            </tr>
                        </tbody>
                    </table>
                </div>

                <!-- Horizontal scrollbar -->
                <div class="mt-px flex h-[17px] shrink-0 border-b border-white bg-[#ececec]">
                    <button class="flex w-[19px] items-center justify-center" aria-label="向左"><svg width="4" height="7" viewBox="0 0 4 7"><path d="M4 0v7L0 3.500z" fill="#333" /></svg></button>
                    <div class="flex-1">
                        <div class="flex h-4 w-[93.500%] items-center justify-center gap-px rounded-[2px] border border-[#979797] bg-[linear-gradient(#f4f4f4_0%,#e4e4e4_45%,#cfcfcf_50%,#bdbdbf_100%)]">
                            <span class="h-[7px] w-0.5 bg-linear-to-r from-[#555] to-[#bbb]"></span><span class="h-[7px] w-0.5 bg-linear-to-r from-[#555] to-[#bbb]"></span><span class="h-[7px] w-0.5 bg-linear-to-r from-[#555] to-[#bbb]"></span>
                        </div>
                    </div>
                    <button class="flex w-[19px] items-center justify-center" aria-label="向右"><svg width="4" height="7" viewBox="0 0 4 7"><path d="M0 0v7l4-3.500z" fill="#333" /></svg></button>
                </div>

                <!-- Splitter -->
                <div class="mx-auto flex h-[7px] w-2/5 shrink-0 items-center gap-1 border border-[#a0a0a0] px-[5px]">
                    <svg width="6" height="3" viewBox="0 0 6 3"><path d="M0 0h6L3 3z" fill="#3090f0" /></svg>
                    <span class="h-px flex-1 bg-[repeating-linear-gradient(90deg,#3090f0_0_1px,transparent_1px_3px)]"></span>
                    <svg width="6" height="3" viewBox="0 0 6 3"><path d="M0 0h6L3 3z" fill="#3090f0" /></svg>
                </div>

                <!-- Record actions -->
                <div class="mt-[3px] mb-[9px] flex shrink-0 pl-[10px] text-[13px]">
                    <div class="relative mr-[6px] h-6 w-[129px] p-0.5 shadow-[inset_1px_1px_#a0a0a0,inset_-1px_-1px_#fff,inset_2px_2px_#696969,inset_-2px_-2px_#e3e3e3]">
                        <select aria-label="记录日期" class="block h-5 w-full appearance-none bg-white pl-0.5 text-base leading-5"><option>本日记录</option></select>
                        <span class="pointer-events-none absolute top-0.5 right-0.5 flex h-5 w-[17px] items-center justify-center bg-[#f0f0f0] shadow-[inset_1px_1px_#e3e3e3,inset_-1px_-1px_#696969,inset_2px_2px_#fff,inset_-2px_-2px_#a0a0a0]"><svg width="7" height="4" viewBox="0 0 7 4"><path d="M0 0h7L3.500 4z" /></svg></span>
                    </div>
                    <div class="relative mr-[5px] h-6 w-[129px] p-0.5 shadow-[inset_1px_1px_#a0a0a0,inset_-1px_-1px_#fff,inset_2px_2px_#696969,inset_-2px_-2px_#e3e3e3]">
                        <select aria-label="记录状态" class="block h-5 w-full appearance-none bg-white pl-0.5 text-base leading-5"><option>未完成记录</option></select>
                        <span class="pointer-events-none absolute top-0.5 right-0.5 flex h-5 w-[17px] items-center justify-center bg-[#f0f0f0] shadow-[inset_1px_1px_#e3e3e3,inset_-1px_-1px_#696969,inset_2px_2px_#fff,inset_-2px_-2px_#a0a0a0]"><svg width="7" height="4" viewBox="0 0 7 4"><path d="M0 0h7L3.500 4z" /></svg></span>
                    </div>
                    <button class="flex h-[25px] w-[100px] items-center justify-end gap-[5px] pr-[14px] shadow-[inset_1px_1px_#fff,inset_-1px_-1px_#696969,inset_2px_2px_#e3e3e3,inset_-2px_-2px_#a0a0a0]">
                        <svg width="16" height="16" viewBox="0 0 16 16">
                            <rect x=".5" y=".5" width="15" height="15" fill="#c8c8c8" stroke="#999" />
                            <rect x="2" y="2" width="12" height="12" fill="#3c9cf0" />
                            <path d="M2 6q4-3 7 0t5 1v4H2z" fill="#d4f0ff" />
                            <path d="M2 9q4-4 7-1l2 3H2z" fill="#1c6820" /><path d="M2 11h12v3H2z" fill="#74b030" />
                        </svg>
                        过磅图片
                    </button>
                    <button class="flex h-[25px] w-[100px] items-center justify-end gap-1 pr-[14px] shadow-[inset_1px_1px_#fff,inset_-1px_-1px_#696969,inset_2px_2px_#e3e3e3,inset_-2px_-2px_#a0a0a0]">
                        <svg width="17" height="17" viewBox="0 0 17 17">
                            <path d="M4.500 4.500h11v11h-11z" fill="#e0e0e0" stroke="#111" />
                            <path d="M7 13h6V7" stroke="#999" stroke-width="2" fill="none" />
                            <rect x=".5" y=".5" width="10" height="9" fill="#f4f4f4" stroke="#111" /><path d="M0 1.500h11" stroke="#1444e8" stroke-width="2" />
                        </svg>
                        显示字段
                    </button>
                    <button class="flex h-[25px] w-[100px] items-center justify-between pr-[14px] pl-[5px] shadow-[inset_1px_1px_#fff,inset_-1px_-1px_#696969,inset_2px_2px_#e3e3e3,inset_-2px_-2px_#a0a0a0]">
                        <svg width="17" height="12" viewBox="0 0 17 12">
                            <path d="M1.500 4.500l3-2h9l2 2v5h-14z" fill="#b4b4b4" stroke="#444" /><path d="M2 5.500h13" stroke="#eee" /><path d="M11 7.500h2" stroke="#28d828" />
                        </svg>
                        数据导出
                    </button>
                    <button class="flex h-[25px] w-[100px] items-center justify-end gap-[5px] pr-[14px] shadow-[inset_1px_1px_#fff,inset_-1px_-1px_#696969,inset_2px_2px_#e3e3e3,inset_-2px_-2px_#a0a0a0]">
                        <svg width="16" height="15" viewBox="0 0 16 15">
                            <path d="M5 1h9l-2 6H3z" fill="#fff" stroke="#111" /><path d="M6 3h5M5 5h5" stroke="#111" />
                            <path d="M1 7h12l2-3v6l-3 4H1z" fill="#999" stroke="#111" /><path d="M2 9h10v2H2z" fill="#eee" /><path d="M7 11.500h3" stroke="#f0e000" stroke-width="2" />
                        </svg>
                        报表打印
                    </button>
                    <button class="flex h-[25px] w-[100px] items-center justify-end gap-[5px] pr-[14px] shadow-[inset_1px_1px_#fff,inset_-1px_-1px_#696969,inset_2px_2px_#e3e3e3,inset_-2px_-2px_#a0a0a0]">
                        <svg width="15" height="15" viewBox="0 0 15 15"><path d="M5 1h4v4h5v4H9v5H5V9H1V5h4z" fill="#f04848" stroke="#702020" /><path d="M6 2h2v4h5" stroke="#ffa8a0" fill="none" /></svg>
                        手工补单
                    </button>
                </div>

                <!-- Status bar -->
                <footer class="flex h-[19px] shrink-0 items-center bg-linear-to-b from-[#d9d9d9] to-white text-xs leading-4">
                    <span class="w-[102px] border-r border-[#c4c4c4] pl-[5px]">[单机模式]</span>
                    <span class="w-[133px] border-r border-[#c4c4c4] pl-[3px] whitespace-nowrap">当前用户: 管理员</span>
                    <span class="ml-0.5 flex w-[30px] justify-end overflow-hidden whitespace-nowrap">守系统</span>
                    <span class="ml-auto w-[201px] border-x border-[#c4c4c4] pr-[3px] text-center">2021/2/18 星期四 15:43:24</span>
                    <svg class="mr-0.5 ml-[19px]" width="12" height="12" viewBox="0 0 12 12"><path d="M9 1h2v2H9zM5 5h2v2H5zM9 5h2v2H9zM1 9h2v2H1zM5 9h2v2H5zM9 9h2v2H9z" fill="#b8b8b8" /></svg>
                </footer>
            </div>
        </div>
    </div>
</body>

</html>
